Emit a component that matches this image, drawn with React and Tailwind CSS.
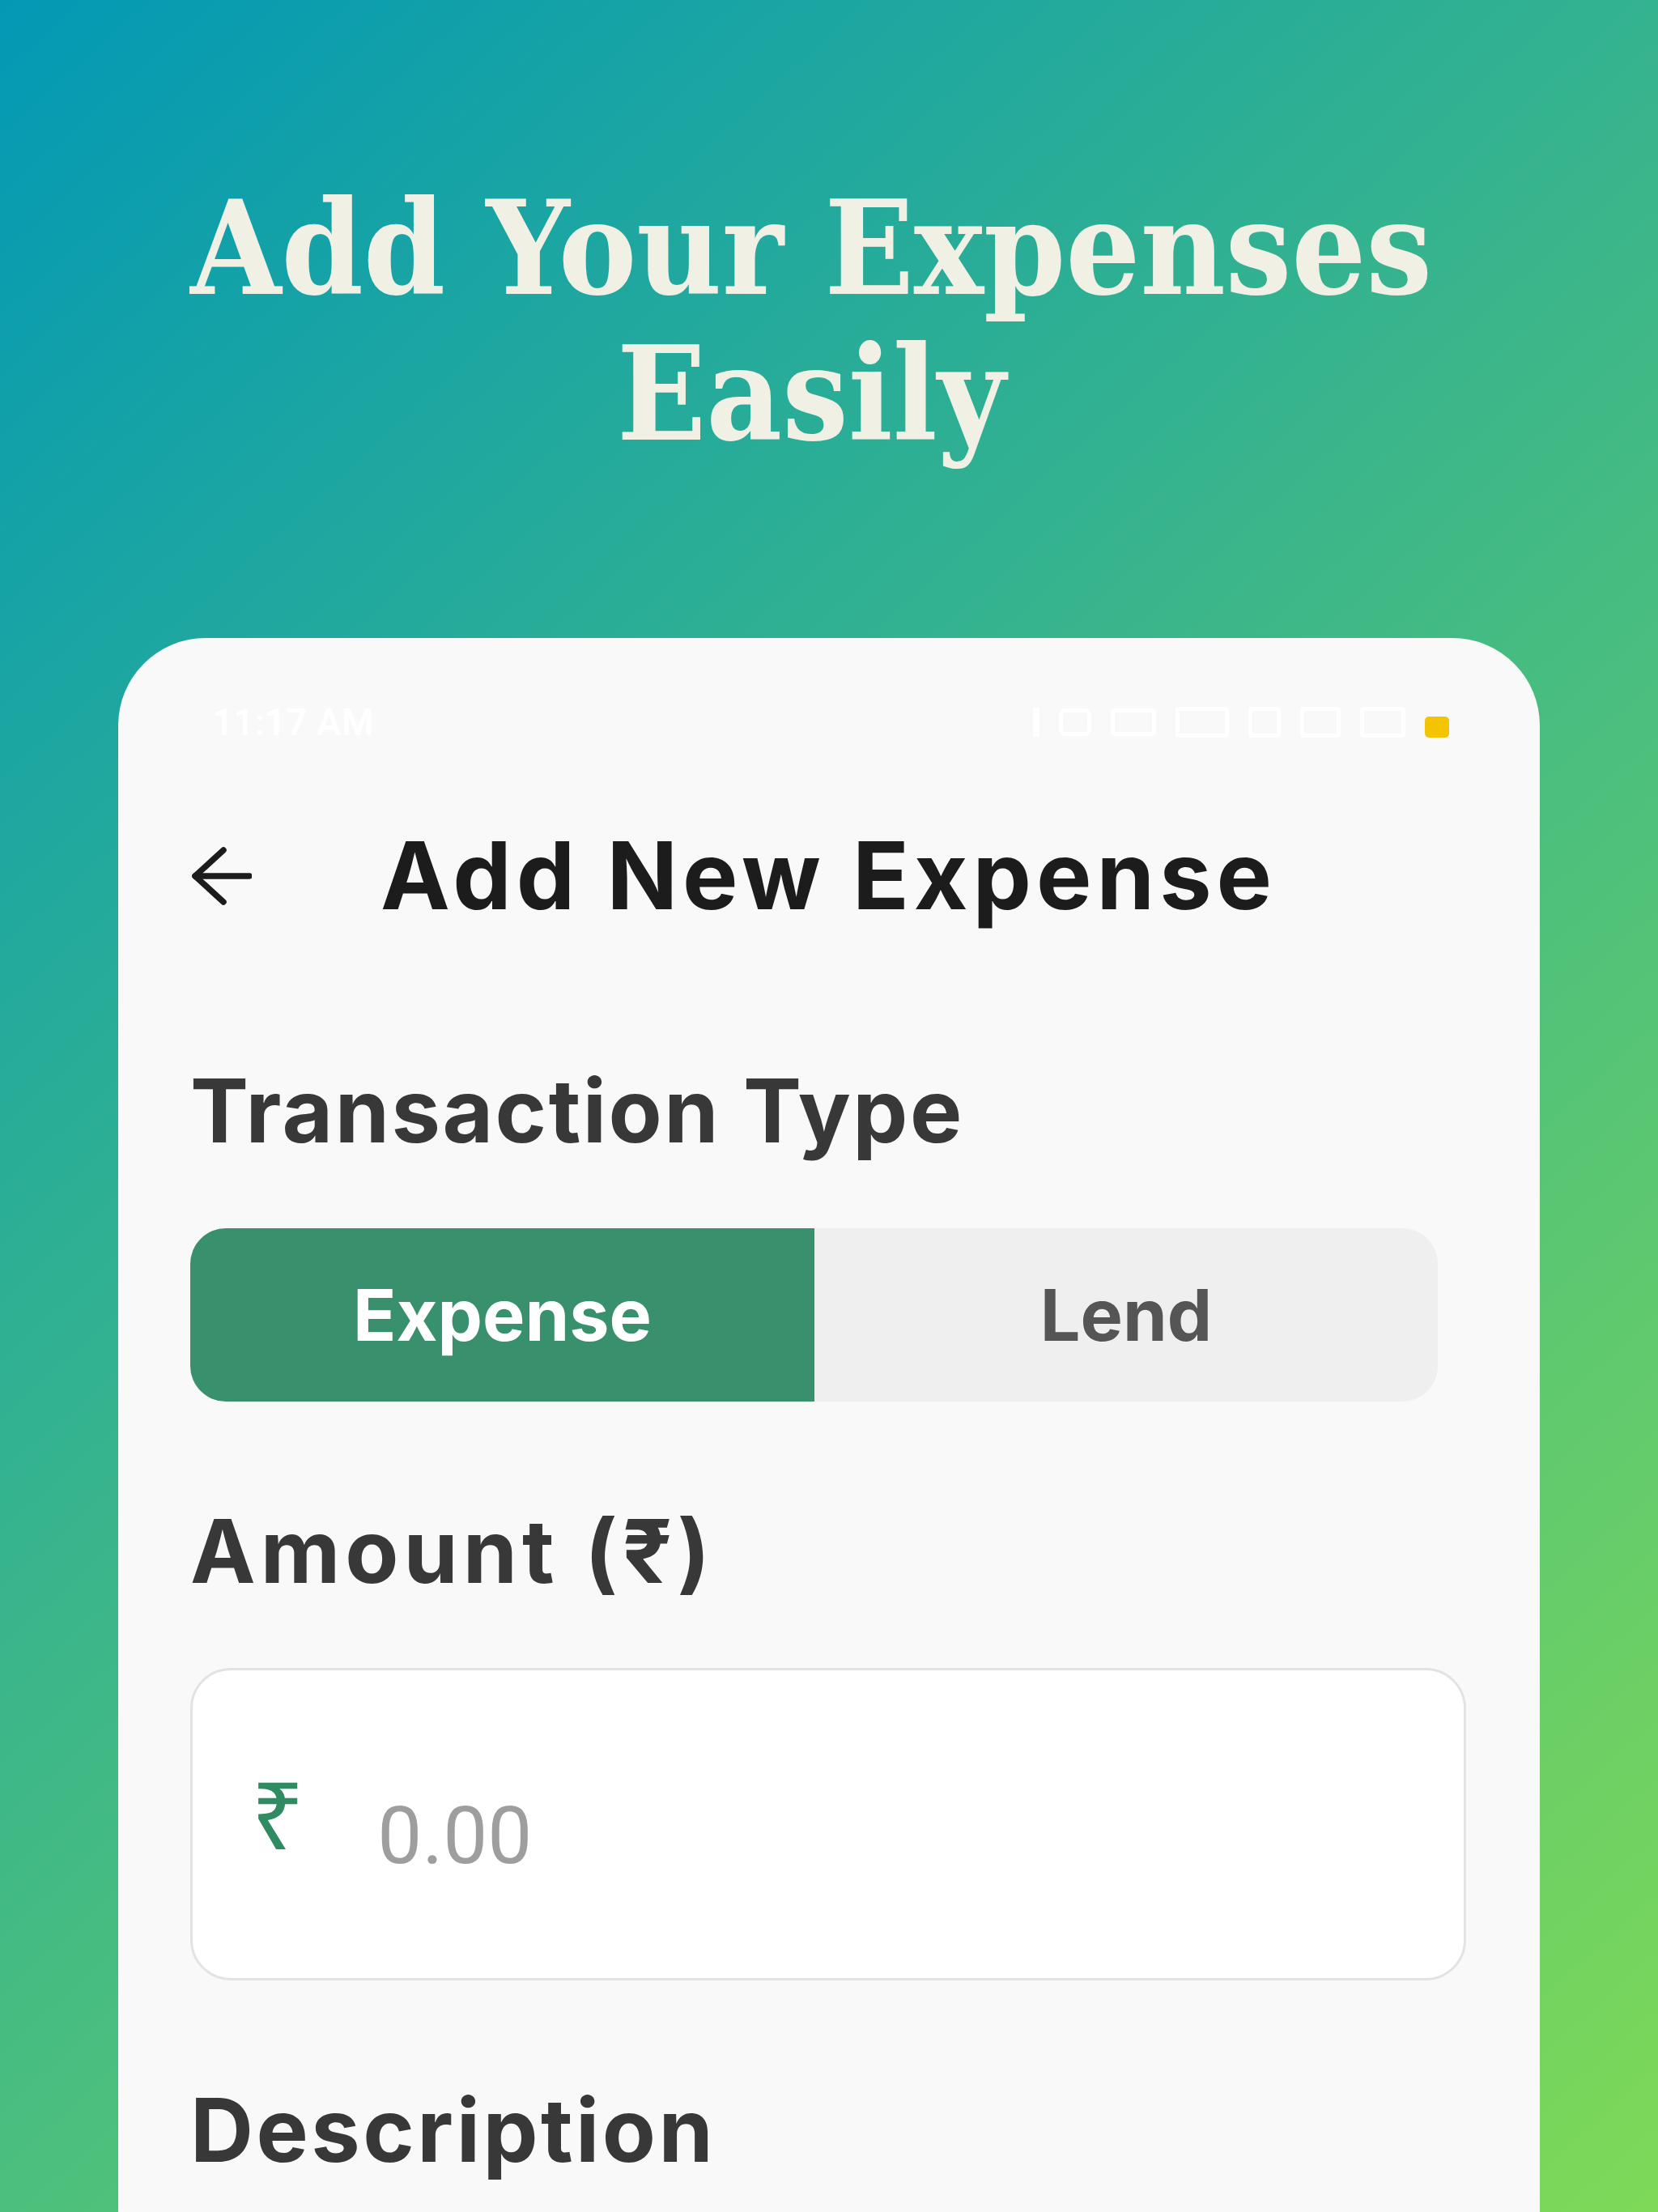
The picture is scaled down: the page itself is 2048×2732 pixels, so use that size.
import React from "react";

export default function App() {
  return (
    <div className="w-[2048px] h-[2732px] overflow-hidden flex flex-col bg-[linear-gradient(138deg,#0399b5_0%,#7ed957_100%)]">
      <h1 className="pt-[217px] pr-[44px] text-center text-[161px] leading-[180px] font-bold text-[#f1f0e5] font-['DejaVu_Serif_Condensed','DejaVu_Serif',serif]">
        Add Your Expenses
        <br />
        Easily
      </h1>

      <div className="mt-[211px] mx-[146px] flex-1 rounded-t-[108px] bg-[#f9f9f9] pl-[89px] pr-[91px] flex flex-col font-['Inter',sans-serif]">
        {/* status bar */}
        <div className="mt-[74px] h-[60px] flex items-center justify-between pl-[27px] pr-[21px]">
          <span className="text-white text-[46px] font-semibold font-['Roboto',sans-serif]">11:17 AM</span>
          <div className="flex items-center gap-[24px]">
            <div className="w-[8px] h-[38px] bg-white rounded-[3px]" />
            <div className="w-[40px] h-[34px] border-[5px] border-white rounded-[8px]" />
            <div className="w-[56px] h-[34px] border-[5px] border-white rounded-[4px]" />
            <div className="w-[66px] h-[38px] border-[5px] border-white rounded-[4px]" />
            <div className="w-[40px] h-[38px] border-[5px] border-white rounded-[4px]" />
            <div className="w-[50px] h-[38px] border-[5px] border-white rounded-[4px]" />
            <div className="w-[56px] h-[38px] border-[5px] border-white rounded-[4px]" />
            <div className="w-[30px] h-[26px] bg-[#f5c400] rounded-[5px] mt-[12px]" />
          </div>
        </div>

        {/* header */}
        <div className="mt-[102px] flex items-center h-[115px]">
          <svg width="76" height="72" viewBox="0 0 76 72" className="shrink-0">
            <path d="M6 36 H73" stroke="#1c1c1c" strokeWidth="7.5" strokeLinecap="round" fill="none" />
            <path d="M41 4 L6 36 L41 68" stroke="#1c1c1c" strokeWidth="7.5" strokeLinecap="round" strokeLinejoin="round" fill="none" />
          </svg>
          <span className="ml-[159px] text-[115px] leading-none font-bold text-[#1c1c1c] tracking-[6px]">
            Add New Expense
          </span>
        </div>

        {/* transaction type */}
        <div className="mt-[179px] text-[108px] leading-none font-bold text-[#383838] tracking-[2.5px]">
          Transaction Type
        </div>

        <div className="mt-[91px] w-[1541px] h-[214px] flex rounded-[44px] overflow-hidden bg-[#efefef]">
          <div className="w-[771px] h-full bg-[#38916c] flex items-center justify-center">
            <span className="text-[88px] font-bold text-white leading-none">Expense</span>
          </div>
          <div className="flex-1 h-full flex items-center justify-center">
            <span className="text-[88px] font-bold text-[#555555] leading-none">Lend</span>
          </div>
        </div>

        {/* amount */}
        <div className="mt-[131px] text-[108px] leading-none font-bold text-[#383838] tracking-[6px]">
          Amount (₹)
        </div>

        <div className="mt-[90px] w-full h-[386px] bg-white border-[3px] border-[#e3e3e3] rounded-[50px] flex items-center pl-[72px]">
          <span className="text-[116px] leading-none text-[#2e8b62] font-['Noto_Sans',sans-serif] -mt-[28px]">₹</span>
          <span className="ml-[90px] text-[98px] leading-none text-[#9e9e9e] font-['Roboto',sans-serif] mt-[30px]">0.00</span>
        </div>

        {/* description */}
        <div className="mt-[131px] text-[108px] leading-none font-bold text-[#383838] tracking-[3.5px]">
          Description
        </div>
      </div>
    </div>
  );
}
